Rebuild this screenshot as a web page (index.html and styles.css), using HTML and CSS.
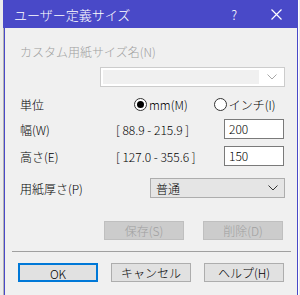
FILE: index.html
```html
<!DOCTYPE html>
<html lang="ja">
<head>
  <meta charset="UTF-8">
  <title>ユーザー定義サイズ</title>
  <link rel="stylesheet" href="styles.css">
</head>
<body>

  <div class="dialog">

    <div class="titlebar">
      <span class="title">ユーザー定義サイズ</span>
      <span class="help">?</span>
      <svg class="close" width="11" height="11" viewBox="0 0 11 11">
        <path d="M0.5 0.5 L10.5 10.5 M10.5 0.5 L0.5 10.5" stroke="#fff" stroke-width="1.2" fill="none"/>
      </svg>
    </div>

    <div class="content">

      <div class="name-label">カスタム用紙サイズ名(N)</div>
      <div class="combo disabled">
        <div class="combo-field"></div>
        <svg class="chevron" width="10" height="6" viewBox="0 0 10 6">
          <polyline points="0.5,0.5 5,5 9.5,0.5" stroke="#a8a8a8" fill="none"/>
        </svg>
      </div>

      <!-- unit -->
      <div class="row unit-row">
        <span class="label">単位</span>
        <span class="radio checked"></span>
        <span class="radio-text">mm(M)</span>
        <span class="radio second"></span>
        <span class="radio-text">インチ(I)</span>
      </div>

      <div class="row size-row">
        <span class="label">幅(W)</span>
        <span class="range">[ 88.9 - 215.9 ]</span>
        <span class="input">200</span>
      </div>

      <div class="row size-row second-size">
        <span class="label">高さ(E)</span>
        <span class="range">[ 127.0 - 355.6 ]</span>
        <span class="input">150</span>
      </div>

      <div class="row thick-row">
        <span class="label">用紙厚さ(P)</span>
        <div class="select">
          <span>普通</span>
          <svg class="chevron" width="10" height="6" viewBox="0 0 10 6">
            <polyline points="0.5,0.5 5,5 9.5,0.5" stroke="#333" fill="none"/>
          </svg>
        </div>
      </div>

      <div class="actions">
        <button class="btn disabled-btn">保存(S)</button>
        <button class="btn disabled-btn">削除(D)</button>
      </div>

      <div class="separator"></div>

      <div class="footer">
        <button class="btn default-btn">OK</button>
        <button class="btn">キャンセル</button>
        <button class="btn">ヘルプ(H)</button>
      </div>

    </div>
  </div>

</body>
</html>
```

FILE: styles.css
```css
body {
  margin: 0;
  background-color: #ececec;
  font-family: "Noto Sans CJK JP", "Liberation Sans", sans-serif;
  font-size: 12px;
  font-weight: 300;
  color: #000;
}

.dialog {
  margin-left: 4px;
  width: 292px;
  height: 295px;
  background-color: #f0f0f0;
  border-left: 1px solid #4949c8;
  border-right: 1px solid #4949c8;
  box-shadow: -1px 0 0 #b4b4b4, 1px 0 0 #ffffff;
}

.titlebar {
  height: 28px;
  margin-left: -2px;
  margin-right: -1px;
  background-color: #4949c8;
  color: #fff;
  display: flex;
  align-items: center;
  padding-left: 11px;
}
.title {
  font-size: 13px;
  flex: 1;
}
.help {
  font-size: 13px;
  margin-right: 34px;
}
.close {
  margin-right: 16px;
}

.content {
  padding: 0 12px 0 15px;
}

.name-label {
  margin-top: 16px;
  height: 16px;
  line-height: 16px;
  color: #a0a0a0;
}

.combo {
  margin: 7px 0 0 80px;
  height: 20px;
  box-sizing: border-box;
  border: 1px solid #cccccc;
  background-color: #ffffff;
  display: flex;
  align-items: center;
  padding: 2px;
}
.combo-field {
  flex: 1;
  height: 100%;
  background-color: #f0f0f0;
}
.combo .chevron {
  margin: 0 5px 0 8px;
}

.row {
  display: flex;
  align-items: center;
  height: 20px;
}
.label {
  width: 96px;
}

.unit-row {
  margin-top: 7px;
}
.radio {
  width: 13px;
  height: 13px;
  box-sizing: border-box;
  border: 1px solid #333;
  border-radius: 50%;
  background-color: #fff;
  margin-left: 18px;
  position: relative;
}
.radio.checked::after {
  content: "";
  position: absolute;
  left: 2px;
  top: 2px;
  width: 7px;
  height: 7px;
  border-radius: 50%;
  background-color: #000;
}
.radio.second {
  margin-left: 26px;
}
.radio-text {
  margin-left: 2px;
}

.size-row {
  margin-top: 5px;
}
.second-size {
  margin-top: 7px;
}
.range {
  width: 108px;
}
.input {
  width: 60px;
  height: 20px;
  box-sizing: border-box;
  border: 1px solid #7a7a7a;
  background-color: #fff;
  padding-left: 4px;
  line-height: 17px;
}

.thick-row {
  margin-top: 12px;
}
.select {
  margin-left: 34px;
  flex: 1;
  height: 20px;
  box-sizing: border-box;
  border: 1px solid #adadad;
  background-color: #e5e5e5;
  display: flex;
  align-items: center;
  justify-content: space-between;
  padding: 0 6px 0 5px;
}

.btn {
  width: 80px;
  height: 19px;
  box-sizing: border-box;
  border: 1px solid #adadad;
  background-color: #e1e1e1;
  font-family: inherit;
  font-size: 12px;
  font-weight: 300;
  padding: 0;
  color: #000;
}

.actions {
  margin-top: 23px;
  display: flex;
  justify-content: flex-end;
  gap: 19px;
  margin-right: 2px;
}
.disabled-btn {
  background-color: #cccccc;
  border-color: #bfbfbf;
  color: #a0a0a0;
}

.separator {
  margin: 11px -6px 0 -8px;
  height: 1px;
  background-color: #a0a0a0;
}

.footer {
  margin: 11px 0 0 -2px;
  display: flex;
  gap: 13px;
}
.default-btn {
  border: 2px solid #0078d7;
}
```
